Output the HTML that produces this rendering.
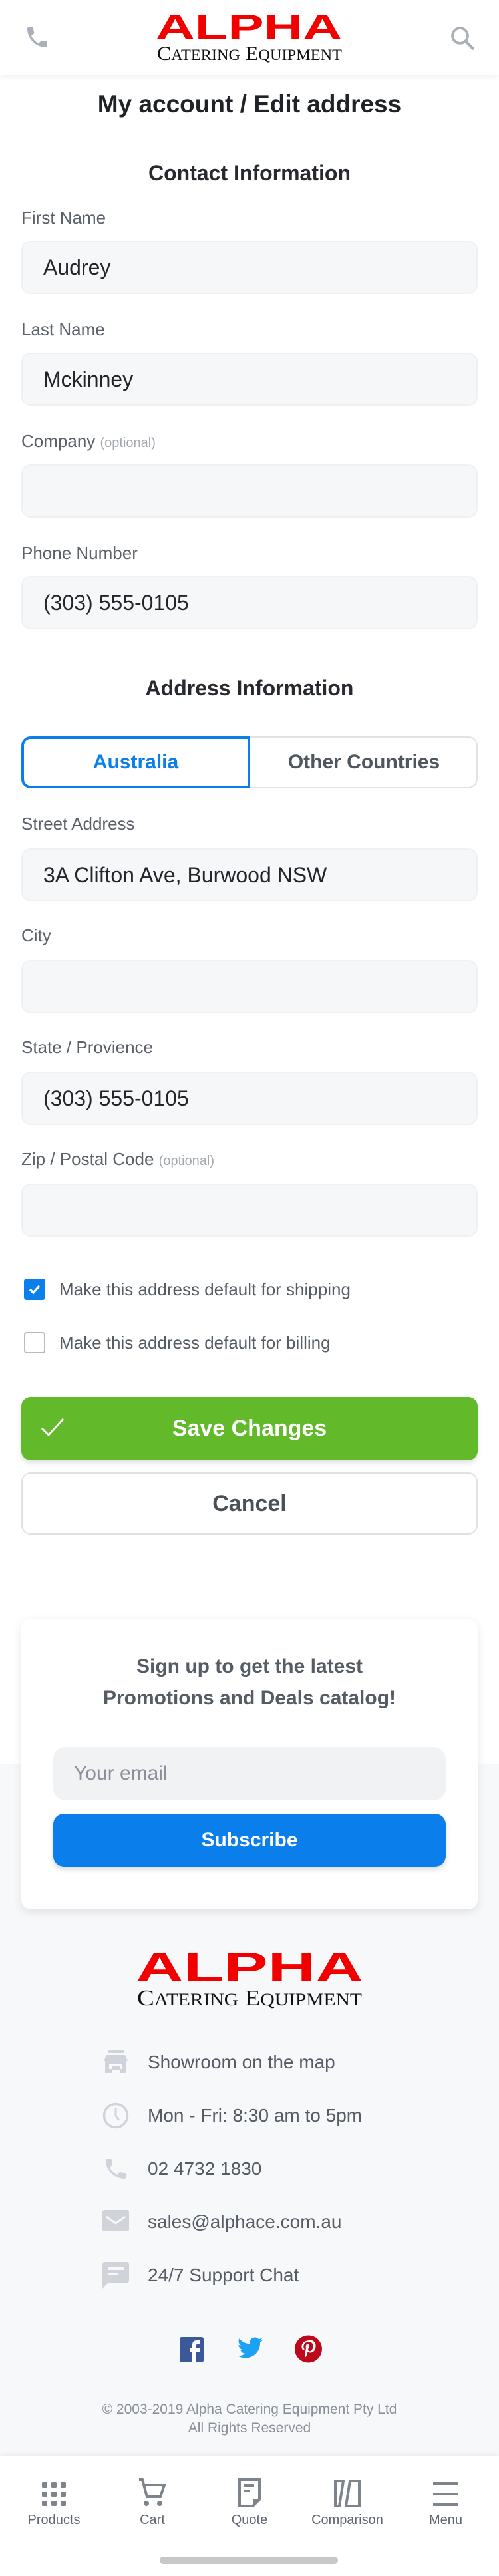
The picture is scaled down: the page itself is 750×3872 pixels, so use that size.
<!DOCTYPE html>
<html><head><meta charset="utf-8">
<style>
*{margin:0;padding:0;box-sizing:border-box}
body{width:750px;height:3872px;position:relative;background:#fff;font-family:"Liberation Sans",sans-serif;overflow:hidden}
.a{position:absolute}
.lbl{position:absolute;left:32px;height:40px;line-height:40px;font-size:26px;color:#5b6169}
.lbl small{font-size:20px;color:#a3a8ae}
.inp{position:absolute;left:32px;width:686px;height:80px;background:#f6f7f9;border:2px solid #eef0f2;border-radius:14px;padding-left:31px;line-height:76px;font-size:32px;color:#22262b}
.ctr{position:absolute;left:0;width:750px;text-align:center}
.row{position:absolute;left:154px;height:40px;line-height:40px;font-size:28px;color:#555c63}
.row svg{position:absolute;left:0;top:0}
.row span{position:absolute;left:68px;white-space:nowrap}
.nav{position:absolute;top:3705px;width:150px;text-align:center}
.nav div{font-size:20px;color:#5f6670;position:absolute;top:72px;width:150px}
</style></head><body>

<!-- header -->
<div class="a" style="left:0;top:0;width:750px;height:112px;background:#fff;box-shadow:0 3px 8px rgba(0,0,0,0.07)"></div>
<svg class="a" style="left:36px;top:36px" width="40" height="40" viewBox="0 0 24 24"><path d="M6.6 10.8c1.4 2.8 3.8 5.1 6.6 6.6l2.2-2.2c.3-.3.7-.4 1-.2 1.1.4 2.3.6 3.6.6.6 0 1 .4 1 1V20c0 .6-.4 1-1 1C10.6 21 3 13.4 3 4c0-.6.4-1 1-1h3.5c.6 0 1 .4 1 1 0 1.2.2 2.4.6 3.6.1.3 0 .7-.2 1z" fill="#a9b0b7"/></svg>
<svg class="a" style="left:674px;top:36px" width="42" height="42" viewBox="0 0 24 24"><circle cx="10" cy="10" r="6.5" fill="none" stroke="#a9b0b7" stroke-width="2.2"/><path d="M15 15l6 6" stroke="#a9b0b7" stroke-width="2.4" stroke-linecap="round"/></svg>
<svg class="a" style="left:234px;top:18px" width="282" height="76" viewBox="0 0 282 76">
<text x="0" y="40" textLength="280" lengthAdjust="spacingAndGlyphs" font-family="Liberation Sans" font-weight="bold" font-size="52" fill="#f20000">ALPHA</text>
<text x="2" y="72" textLength="278" lengthAdjust="spacingAndGlyphs" font-family="Liberation Serif" font-size="30" fill="#111">C<tspan font-size="23">ATERING</tspan> E<tspan font-size="23">QUIPMENT</tspan></text>
</svg>

<div class="ctr" style="top:134px;font-size:37px;font-weight:bold;color:#1f2226;line-height:46px">My account / Edit address</div>
<div class="ctr" style="top:240px;font-size:32px;font-weight:bold;color:#26292d;line-height:40px">Contact Information</div>

<div class="lbl" style="top:307px">First Name</div>
<div class="inp" style="top:362px">Audrey</div>
<div class="lbl" style="top:475px">Last Name</div>
<div class="inp" style="top:530px">Mckinney</div>
<div class="lbl" style="top:643px">Company <small>(optional)</small></div>
<div class="inp" style="top:698px"></div>
<div class="lbl" style="top:811px">Phone Number</div>
<div class="inp" style="top:866px">(303) 555-0105</div>

<div class="ctr" style="top:1014px;font-size:32px;font-weight:bold;color:#26292d;line-height:40px">Address Information</div>
<div class="a" style="left:32px;top:1107px;width:686px;height:78px;border:2px solid #dfe2e6;border-radius:14px"></div>
<div class="a" style="left:32px;top:1107px;width:344px;height:78px;border:4px solid #0a7eea;border-radius:14px 0 0 14px;text-align:center;line-height:70px;font-size:30px;font-weight:bold;color:#0a7eea">Australia</div>
<div class="a" style="left:376px;top:1107px;width:342px;height:78px;text-align:center;line-height:78px;font-size:30px;font-weight:bold;color:#4f565e">Other Countries</div>

<div class="lbl" style="top:1218px">Street Address</div>
<div class="inp" style="top:1275px">3A Clifton Ave, Burwood NSW</div>
<div class="lbl" style="top:1386px">City</div>
<div class="inp" style="top:1443px"></div>
<div class="lbl" style="top:1554px">State / Provience</div>
<div class="inp" style="top:1611px">(303) 555-0105</div>
<div class="lbl" style="top:1722px">Zip / Postal Code <small>(optional)</small></div>
<div class="inp" style="top:1779px"></div>

<div class="a" style="left:36px;top:1922px;width:32px;height:32px;background:#0a7eea;border-radius:4px"></div>
<svg class="a" style="left:36px;top:1922px" width="32" height="32" viewBox="0 0 32 32"><path d="M9 16l5 5 9-10" fill="none" stroke="#fff" stroke-width="3.5"/></svg>
<div class="lbl" style="left:89px;top:1918px;color:#555c63">Make this address default for shipping</div>
<div class="a" style="left:36px;top:2002px;width:32px;height:32px;border:2px solid #b7bcc2;border-radius:4px"></div>
<div class="lbl" style="left:89px;top:1998px;color:#555c63">Make this address default for billing</div>

<div class="a" style="left:32px;top:2100px;width:686px;height:95px;background:#62b92a;border-radius:14px;box-shadow:0 4px 8px rgba(0,0,0,0.12);text-align:center;line-height:95px;font-size:34px;font-weight:bold;color:#fff">Save Changes</div>
<svg class="a" style="left:60px;top:2130px" width="38" height="32" viewBox="0 0 38 32"><path d="M3 17l10 10L35 3" fill="none" stroke="#fff" stroke-width="3"/></svg>
<div class="a" style="left:32px;top:2213px;width:686px;height:94px;border:2px solid #dfe1e5;border-radius:14px;text-align:center;line-height:90px;font-size:34px;font-weight:bold;color:#4a5058">Cancel</div>

<!-- footer -->
<div class="a" style="left:0;top:2652px;width:750px;height:1040px;background:#f7f8fa"></div>
<div class="a" style="left:32px;top:2433px;width:686px;height:437px;background:#fff;border-radius:14px;box-shadow:0 4px 14px rgba(0,0,0,0.1)"></div>
<div class="ctr" style="top:2481px;font-size:30px;font-weight:bold;color:#555c63;line-height:48px">Sign up to get the latest<br>Promotions and Deals catalog!</div>
<div class="a" style="left:80px;top:2626px;width:590px;height:80px;background:#f1f2f4;border-radius:18px;padding-left:31px;line-height:80px;font-size:30px;color:#8a9099">Your email</div>
<div class="a" style="left:80px;top:2726px;width:590px;height:80px;background:#0a7eea;border-radius:16px;box-shadow:0 4px 8px rgba(0,0,0,0.15);text-align:center;line-height:80px;font-size:30px;font-weight:bold;color:#fff">Subscribe</div>

<svg class="a" style="left:204px;top:2930px" width="344" height="92" viewBox="0 0 344 92">
<text x="0" y="48" textLength="342" lengthAdjust="spacingAndGlyphs" font-family="Liberation Sans" font-weight="bold" font-size="62" fill="#f20000">ALPHA</text>
<text x="2" y="84" textLength="338" lengthAdjust="spacingAndGlyphs" font-family="Liberation Serif" font-size="34" fill="#111">C<tspan font-size="26">ATERING</tspan> E<tspan font-size="26">QUIPMENT</tspan></text>
</svg>

<div class="row" style="top:3080px"><svg width="40" height="40" viewBox="0 0 40 40"><rect x="8" y="2" width="24" height="4" fill="#d0d4da"/><path d="M6 9h28l4 9H2z" fill="#d0d4da"/><rect x="4" y="18" width="32" height="4" fill="#d0d4da"/><path d="M4 22h6v14h-6zM30 22h6v14h-6zM10 30h20v6h-4v-4h-12v4h-4z" fill="#d0d4da"/><rect x="14" y="26" width="12" height="4" fill="#d0d4da"/></svg><span>Showroom on the map</span></div>
<div class="row" style="top:3160px"><svg width="40" height="40" viewBox="0 0 40 40"><circle cx="20" cy="20" r="17.5" fill="none" stroke="#d0d4da" stroke-width="3.5"/><path d="M20 9v11l5 7" fill="none" stroke="#d0d4da" stroke-width="3"/></svg><span>Mon - Fri: 8:30 am to 5pm</span></div>
<div class="row" style="top:3240px"><svg width="40" height="40" viewBox="0 0 24 24"><path d="M6.6 10.8c1.4 2.8 3.8 5.1 6.6 6.6l2.2-2.2c.3-.3.7-.4 1-.2 1.1.4 2.3.6 3.6.6.6 0 1 .4 1 1V20c0 .6-.4 1-1 1C10.6 21 3 13.4 3 4c0-.6.4-1 1-1h3.5c.6 0 1 .4 1 1 0 1.2.2 2.4.6 3.6.1.3 0 .7-.2 1z" fill="#d0d4da"/></svg><span>02 4732 1830</span></div>
<div class="row" style="top:3320px"><svg width="40" height="40" viewBox="0 0 40 40"><rect x="0" y="2" width="40" height="32" rx="3" fill="#d0d4da"/><path d="M6 12l14 10 14-10" fill="none" stroke="#f7f8fa" stroke-width="3"/></svg><span>sales@alphace.com.au</span></div>
<div class="row" style="top:3400px"><svg width="40" height="40" viewBox="0 0 40 40"><path d="M4 0h32a4 4 0 0 1 4 4v24a4 4 0 0 1-4 4H8l-8 8V4a4 4 0 0 1 4-4z" fill="#d0d4da"/><rect x="8" y="8" width="24" height="4" fill="#f7f8fa"/><rect x="8" y="16" width="16" height="4" fill="#f7f8fa"/></svg><span>24/7 Support Chat</span></div>

<svg class="a" style="left:270px;top:3513px" width="36" height="38" viewBox="0 0 36 38"><rect width="36" height="38" rx="3" fill="#3b5998"/><path d="M25 38V23h5l1-6h-6v-4c0-2 1-3 3-3h3V5h-5c-5 0-7 3-7 7v5h-4v6h4v15z" fill="#fff"/></svg>
<svg class="a" style="left:355px;top:3513px" width="42" height="38" viewBox="0 0 24 22"><path d="M23 2.5c-.8.4-1.7.6-2.6.7.9-.6 1.6-1.4 2-2.5-.9.5-1.9.9-2.9 1.1A4.5 4.5 0 0 0 11.8 6 12.8 12.8 0 0 1 2.5 1.3a4.5 4.5 0 0 0 1.4 6c-.7 0-1.4-.2-2-.6 0 2.2 1.6 4 3.6 4.4-.7.2-1.4.2-2 .1.6 1.8 2.200 3.1 4.2 3.1A9 9 0 0 1 1 16.2 12.8 12.8 0 0 0 7.9 18.2c8.3 0 12.8-6.9 12.8-12.8v-.6c.9-.6 1.6-1.4 2.3-2.3z" fill="#1da1f2"/></svg>
<svg class="a" style="left:443px;top:3510px" width="41" height="42" viewBox="0 0 24 24"><circle cx="12" cy="12" r="12" fill="#bd081c"/><path d="M12.3 4.5c-4.1 0-6.2 2.9-6.2 5.4 0 1.5.6 2.8 1.8 3.3.2.1.4 0 .4-.2l.2-.7c.1-.2 0-.3-.1-.5-.4-.4-.6-1-.6-1.800 0-2.3 1.7-4.3 4.5-4.3 2.5 0 3.8 1.5 3.8 3.5 0 2.6-1.2 4.8-2.9 4.8-.9 0-1.6-.8-1.4-1.700.3-1.1.8-2.4.8-3.2 0-.7-.4-1.4-1.2-1.4-1 0-1.7 1-1.7 2.3 0 .8.3 1.4.3 1.4l-1.1 4.8c-.3 1.4 0 3.2 0 3.4h.3c.1-.2 1.3-1.6 1.7-3l.6-2.5c.3.6 1.2 1.1 2.2 1.1 2.9 0 4.8-2.6 4.8-6.1 0-2.7-2.2-5.2-5.7-5.2z" fill="#fff"/></svg>

<div class="ctr" style="top:3608px;font-size:21px;color:#8a9099;line-height:28px">© 2003-2019 Alpha Catering Equipment Pty Ltd<br>All Rights Reserved</div>

<!-- bottom nav -->
<div class="a" style="left:0;top:3692px;width:750px;height:180px;background:#fff;box-shadow:0 -3px 8px rgba(0,0,0,0.06)"></div>
<div class="nav" style="left:6px"><svg width="40" height="40" viewBox="0 0 40 40" style="margin-top:24px"><g fill="#7d848c"><rect x="2" y="2" width="8" height="8" rx="1.5"/><rect x="16" y="2" width="8" height="8" rx="1.5"/><rect x="30" y="2" width="8" height="8" rx="1.5"/><rect x="2" y="16" width="8" height="8" rx="1.5"/><rect x="16" y="16" width="8" height="8" rx="1.5"/><rect x="30" y="16" width="8" height="8" rx="1.5"/><rect x="2" y="30" width="8" height="8" rx="1.5"/><rect x="16" y="30" width="8" height="8" rx="1.5"/><rect x="30" y="30" width="8" height="8" rx="1.5"/></g></svg><div>Products</div></div>
<div class="nav" style="left:154px"><svg width="42" height="44" viewBox="0 0 42 44" style="margin-top:20px"><path d="M1 2h5l7 26h20l6-18H10" fill="none" stroke="#7d848c" stroke-width="4"/><circle cx="12" cy="38" r="4" fill="#7d848c"/><circle cx="32" cy="38" r="4" fill="#7d848c"/></svg><div>Cart</div></div>
<div class="nav" style="left:300px"><svg width="34" height="44" viewBox="0 0 34 44" style="margin-top:20px"><path d="M2 2h30v30L22 42H2z" fill="none" stroke="#7d848c" stroke-width="4"/><path d="M22 42V32h10z" fill="#7d848c"/><rect x="8" y="9" width="16" height="4" fill="#7d848c"/><rect x="8" y="17" width="10" height="4" fill="#7d848c"/></svg><div>Quote</div></div>
<div class="nav" style="left:447px"><svg width="42" height="42" viewBox="0 0 42 42" style="margin-top:22px"><path d="M3 2h12L9 40H3z M25 2h14v38H19z" fill="none" stroke="#7d848c" stroke-width="4" stroke-linejoin="round"/></svg><div>Comparison</div></div>
<div class="nav" style="left:595px"><svg width="38" height="36" viewBox="0 0 38 36" style="margin-top:26px"><g fill="#7d848c"><rect y="0" width="38" height="4"/><rect y="16" width="38" height="4"/><rect y="32" width="38" height="4"/></g></svg><div>Menu</div></div>
<div class="a" style="left:240px;top:3843px;width:268px;height:11px;background:#c8c8c8;border-radius:6px"></div>
</body></html>
